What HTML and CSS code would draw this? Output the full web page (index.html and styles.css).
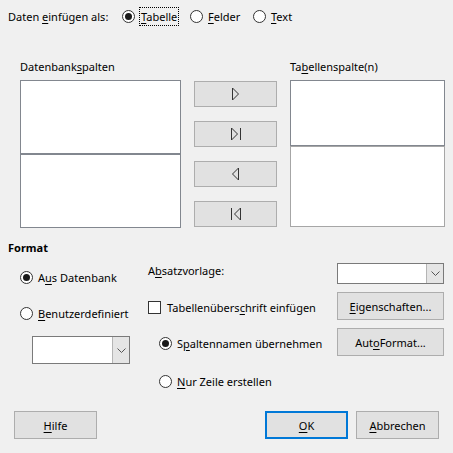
FILE: index.html
```html
<!DOCTYPE html>
<html lang="de">
<head>
<meta charset="utf-8">
<link rel="stylesheet" href="styles.css">
</head>
<body>
<div class="dialog">
  <div class="top">
    <span class="top-label">Daten <u>e</u>infügen als:</span>
    <label class="radio r-tab"><span class="dot on"></span><span class="focus"><u>T</u>abelle</span></label>
    <label class="radio r-fel"><span class="dot"></span><span><u>F</u>elder</span></label>
    <label class="radio r-txt"><span class="dot"></span><span><u>T</u>ext</span></label>
  </div>

  <div class="columns">
    <div class="col-left">
      <div class="col-label">Datenbank<u>s</u>palten</div>
      <div class="list">
        <div class="box dark lb-up"></div>
        <div class="box dark lb-down"></div>
      </div>
    </div>
    <div class="col-mid">
      <button class="arrow-btn"><svg width="9" height="14" viewBox="0 0 9 14"><path d="M1.5 1 L7.5 7 L1.5 13 Z" fill="none" stroke="#333" stroke-width="1"/></svg></button>
      <button class="arrow-btn"><svg width="12" height="14" viewBox="0 0 12 14"><path d="M1.5 1 L7.5 7 L1.5 13 Z" fill="none" stroke="#333" stroke-width="1"/><path d="M10.5 1 V13" stroke="#333" stroke-width="1"/></svg></button>
      <button class="arrow-btn"><svg width="9" height="14" viewBox="0 0 9 14"><path d="M7.5 1 L1.5 7 L7.5 13 Z" fill="none" stroke="#333" stroke-width="1"/></svg></button>
      <button class="arrow-btn"><svg width="12" height="14" viewBox="0 0 12 14"><path d="M1.5 1 V13" stroke="#333" stroke-width="1"/><path d="M10.5 1 L4.5 7 L10.5 13 Z" fill="none" stroke="#333" stroke-width="1"/></svg></button>
    </div>
    <div class="col-right">
      <div class="col-label">Ta<u>b</u>ellenspalte(n)</div>
      <div class="list">
        <div class="box dark rb-up"></div>
        <div class="box light rb-down"></div>
      </div>
    </div>
  </div>

  <div class="format-title">Format</div>

  <div class="format">
    <div class="f-col1">
      <label class="radio f-aus"><span class="dot on"></span><span>A<u>u</u>s Datenbank</span></label>
      <label class="radio f-ben"><span class="dot"></span><span><u>B</u>enutzerdefiniert</span></label>
      <div class="combo combo-small"><span class="combo-field"></span><span class="combo-btn"><svg width="9" height="5" viewBox="0 0 9 5"><path d="M0.5 0.5 L4.5 4.5 L8.5 0.5" fill="none" stroke="#555" stroke-width="1"/></svg></span></div>
    </div>
    <div class="f-col2">
      <div class="f-label">A<u>b</u>satzvorlage:</div>
      <label class="check f-chk"><span class="box-chk"></span><span>Tabellenübers<u>c</u>hrift einfügen</span></label>
      <label class="radio f-spa"><span class="dot on"></span><span>S<u>p</u>altennamen übernehmen</span></label>
      <label class="radio f-nur"><span class="dot"></span><span><u>N</u>ur Zeile erstellen</span></label>
    </div>
    <div class="f-col3">
      <div class="combo combo-wide"><span class="combo-field"></span><span class="combo-btn"><svg width="9" height="5" viewBox="0 0 9 5"><path d="M0.5 0.5 L4.5 4.5 L8.5 0.5" fill="none" stroke="#555" stroke-width="1"/></svg></span></div>
      <button class="btn btn-eig"><u>E</u>igenschaften...</button>
      <button class="btn btn-auto">Aut<u>o</u>Format...</button>
    </div>
  </div>

  <div class="bottom">
    <button class="btn btn-help"><u>H</u>ilfe</button>
    <div class="spacer"></div>
    <button class="btn btn-ok default"><u>O</u>K</button>
    <button class="btn btn-cancel"><u>A</u>bbrechen</button>
  </div>
</div>
</body>
</html>
```

FILE: styles.css
```css
html, body {
  margin: 0;
  padding: 0;
  background: #f0f0f0;
}
body {
  font-family: "Noto Sans", "Open Sans", sans-serif;
  font-size: 11px;
  color: #000;
  width: 453px;
  height: 453px;
  overflow: hidden;
}
u { text-decoration: underline; text-underline-offset: 2px; }
.dialog {
  display: flex;
  flex-direction: column;
}

/* top row */
.top {
  display: flex;
  align-items: center;
  height: 17px;
  margin-top: 8px;
  padding-left: 8px;
}
.top-label { width: 114px; flex: none; white-space: nowrap; }
.radio {
  display: flex;
  align-items: center;
  gap: 5px;
  white-space: nowrap;
  flex: none;
}
.dot {
  box-sizing: border-box;
  width: 13px;
  height: 13px;
  border: 1px solid #333;
  border-radius: 50%;
  background: #fff;
  flex: none;
  position: relative;
}
.dot.on::after {
  content: "";
  position: absolute;
  left: 2px;
  top: 2px;
  width: 7px;
  height: 7px;
  border-radius: 50%;
  background: #1a1a1a;
}
.focus {
  outline: 1px dotted #000;
  outline-offset: 0;
  padding: 0 1px;
  line-height: 17px;
}
.r-tab { width: 68px; }
.r-fel { width: 63px; }

/* columns */
.columns {
  display: flex;
  margin-top: 34px;
  padding-left: 20px;
}
.col-label {
  height: 21px;
  line-height: 16px;
}
.col-left { width: 161px; }
.col-right { width: 155px; margin-left: 13px; }
.list { display: flex; flex-direction: column; }
.box {
  box-sizing: border-box;
  background: #fff;
}
.box.dark { border: 1px solid #82878f; }
.box.light { border: 1px solid #a6a6a6; }
.lb-up { height: 74px; }
.lb-down { height: 74px; }
.rb-up { height: 66px; }
.rb-down { height: 81px; }
.col-mid {
  width: 83px;
  margin-left: 13px;
  padding-top: 22px;
  display: flex;
  flex-direction: column;
  gap: 14px;
}
.arrow-btn {
  box-sizing: border-box;
  height: 26px;
  width: 83px;
  background: #e1e1e1;
  border: 1px solid #adadad;
  padding: 0;
  display: flex;
  align-items: center;
  justify-content: center;
}

/* format */
.format-title {
  font-weight: bold;
  margin-top: 12px;
  padding-left: 8px;
  line-height: 16px;
}
.format {
  display: flex;
  padding-left: 20px;
}
.f-col1 {
  width: 128px;
  display: flex;
  flex-direction: column;
}
.f-aus { margin-top: 13px; height: 16px; }
.f-ben { margin-top: 20px; height: 16px; }
.combo {
  box-sizing: border-box;
  display: flex;
  border: 1px solid #7a7a7a;
  background: #fff;
}
.combo-field { flex: 1; }
.combo-btn {
  width: 16px;
  background: #e5e5e5;
  border-left: 1px solid #b5b5b5;
  display: flex;
  align-items: center;
  justify-content: center;
}
.combo-small {
  width: 98px;
  height: 28px;
  margin-top: 15px;
  margin-left: 12px;
}
.f-col2 {
  width: 189px;
  display: flex;
  flex-direction: column;
}
.f-label { margin-top: 7px; height: 16px; line-height: 16px; }
.check {
  display: flex;
  align-items: center;
  gap: 6px;
  white-space: nowrap;
}
.box-chk {
  box-sizing: border-box;
  width: 13px;
  height: 13px;
  border: 1px solid #333;
  background: #fff;
}
.f-chk { margin-top: 20px; height: 16px; }
.f-spa { margin-top: 20px; height: 16px; margin-left: 11px; }
.f-nur { margin-top: 22px; height: 16px; margin-left: 11px; }
.f-col3 {
  width: 107px;
  display: flex;
  flex-direction: column;
}
.combo-wide { width: 107px; height: 21px; margin-top: 7px; }
.btn {
  box-sizing: border-box;
  font-family: inherit;
  font-size: 11px;
  color: #000;
  background: #e1e1e1;
  border: 1px solid #adadad;
  height: 28px;
  padding: 0;
}
.btn-eig { margin-top: 8px; }
.btn-auto { margin-top: 8px; }

/* bottom */
.bottom {
  display: flex;
  margin-top: 22px;
  padding: 0 14px;
}
.spacer { flex: 1; }
.bottom .btn { width: 83px; }
.btn.default { border: 2px solid #0078d7; }
.btn-cancel { margin-left: 8px; }
```
